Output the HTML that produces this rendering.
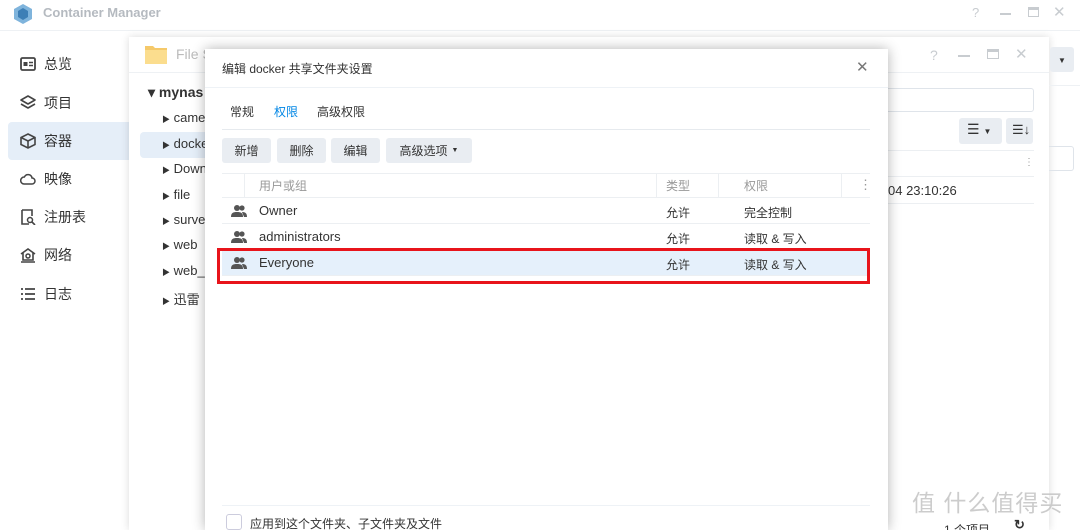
<!DOCTYPE html>
<html><head><meta charset="utf-8"><style>
*{box-sizing:border-box;margin:0;padding:0}
html{width:1080px;height:530px;overflow:hidden}
body{width:1080px;height:530px;overflow:hidden;background:#fff;font-family:"Liberation Sans","Noto Sans CJK SC",sans-serif;font-size:13px;color:#333;position:relative}
.abs{position:absolute;white-space:nowrap}
.hdr{left:0;top:0;width:1080px;height:31px;border-bottom:1px solid #eef1f4;background:#fff}
.side .it{position:absolute;left:8px;width:122px;height:38px;display:flex;align-items:center;padding-left:12px;font-size:14px;color:#333;white-space:nowrap}
.side .ic{width:16px;height:16px;margin-right:8px;display:inline-block;flex:none}
.fs{left:129px;top:37px;width:920px;height:493px;background:#fff;box-shadow:0 0 8px rgba(0,0,0,.15)}
.tree div{position:absolute;left:0;font-size:13px;color:#333}
.dlg{left:205px;top:49px;width:683px;height:481px;background:#fff;box-shadow:0 0 12px rgba(0,0,0,.3)}
.btn{position:absolute;top:89px;height:25px;background:#e9edf2;border-radius:3px;font-size:12px;color:#333;display:flex;align-items:center;justify-content:center}
.row{position:absolute;left:17px;width:648px;height:26px;border-bottom:1px solid #eceff2;font-size:13px}
.row span{position:absolute;top:6px;white-space:nowrap}
.usr{position:absolute;left:9px;top:6px;width:16px;height:14px}
</style></head><body>
<div class="abs hdr">
 <svg class="abs" style="left:13px;top:3px" width="20" height="22" viewBox="0 0 20 22"><polygon points="10,1 19,6 19,16 10,21 1,16 1,6" fill="#7fb4dc"/><polygon points="10,5 15,8 15,14 10,17 5,14 5,8" fill="#3d7fb6"/></svg>
 <div class="abs" style="left:43px;top:5px;font-size:13px;font-weight:bold;color:#b5bac0">Container Manager</div>
 <div class="abs" style="left:972px;top:5px;color:#c8ccd0;font-size:13px">?</div>
 <div class="abs" style="left:1000px;top:13px;width:11px;height:2px;background:#c8ccd0"></div>
 <div class="abs" style="left:1028px;top:7px;width:11px;height:10px;border:1.5px solid #c8ccd0;border-top-width:3px"></div>
 <div class="abs" style="left:1053px;top:3px;color:#c8ccd0;font-size:15px">✕</div>
</div>
<div class="side">
 <div class="it" style="top:45px"><svg class="ic" viewBox="0 0 16 16"><rect x="1" y="2" width="14" height="12" rx="1.5" fill="none" stroke="#444" stroke-width="1.8"/><rect x="3.5" y="6" width="4" height="4" fill="#444"/><path d="M9 6.5h4M9 9.5h4" stroke="#444" stroke-width="1.4"/></svg>总览</div>
 <div class="it" style="top:84px"><svg class="ic" viewBox="0 0 16 16"><path d="M8 1l7 4-7 4-7-4z M1 9l7 4 7-4" fill="none" stroke="#444" stroke-width="1.6" stroke-linejoin="round"/></svg>项目</div>
 <div class="it" style="top:122px;background:#e5eef8;border-radius:4px 0 0 4px"><svg class="ic" viewBox="0 0 16 16"><polygon points="8,1 15,4.5 15,11.5 8,15 1,11.5 1,4.5" fill="none" stroke="#444" stroke-width="1.6"/><polyline points="1,4.5 8,8 15,4.5" fill="none" stroke="#444" stroke-width="1.6"/><path d="M8 8v7" stroke="#444" stroke-width="1.6"/></svg>容器</div>
 <div class="it" style="top:160px"><svg class="ic" viewBox="0 0 16 16"><path d="M4 13h8a3 3 0 0 0 0-6 4 4 0 0 0-7.6-1A3.5 3.5 0 0 0 4 13z" fill="none" stroke="#444" stroke-width="1.5"/></svg>映像</div>
 <div class="it" style="top:198px"><svg class="ic" viewBox="0 0 16 16"><path d="M2 1v14h7M2 1h10v6" fill="none" stroke="#444" stroke-width="1.6"/><circle cx="10" cy="11" r="2.5" fill="none" stroke="#444" stroke-width="1.5"/><path d="M12 13l3 3" stroke="#444" stroke-width="1.6"/></svg>注册表</div>
 <div class="it" style="top:236px"><svg class="ic" viewBox="0 0 16 16"><path d="M1 7l7-5 7 5M3 6v7h10V6M1 15h14" fill="none" stroke="#444" stroke-width="1.6"/><circle cx="8" cy="9" r="2" fill="none" stroke="#444" stroke-width="1.5"/></svg>网络</div>
 <div class="it" style="top:275px"><svg class="ic" viewBox="0 0 16 16"><path d="M1 3h2M5 3h10M1 8h2M5 8h10M1 13h2M5 13h10" stroke="#444" stroke-width="1.8"/></svg>日志</div>
</div>
<div class="abs fs">
 <svg class="abs" style="left:16px;top:7px" width="22" height="20" viewBox="0 0 22 20"><path d="M0 2h8l2 2h12v16H0z" fill="#f5c96a"/><rect x="0" y="6" width="22" height="14" fill="#fbdd8e"/></svg>
 <div class="abs" style="left:47px;top:9px;color:#bbb;font-size:14px">File S</div>
 <div class="abs" style="left:0;top:35px;width:920px;height:1px;background:#eef1f4"></div>
 <div class="abs" style="left:11px;top:95px;width:70px;height:26px;background:#e5eef8;border-radius:4px"></div>
 <div class="tree">
  <div style="left:19px;top:47px;font-weight:bold;font-size:14px">▾ mynas</div>
  <div style="left:33px;top:73px"><small style="font-size:8px">▶</small> came</div>
  <div style="left:33px;top:99px"><small style="font-size:8px">▶</small> docke</div>
  <div style="left:33px;top:124px"><small style="font-size:8px">▶</small> Down</div>
  <div style="left:33px;top:150px"><small style="font-size:8px">▶</small> file</div>
  <div style="left:33px;top:175px"><small style="font-size:8px">▶</small> surve</div>
  <div style="left:33px;top:200px"><small style="font-size:8px">▶</small> web</div>
  <div style="left:33px;top:226px"><small style="font-size:8px">▶</small> web_</div>
  <div style="left:33px;top:252px"><small style="font-size:8px">▶</small> 迅雷</div>
 </div>
 <div class="abs" style="left:801px;top:10px;color:#c8ccd0;font-size:14px">?</div>
 <div class="abs" style="left:829px;top:18px;width:12px;height:2px;background:#c8ccd0"></div>
 <div class="abs" style="left:858px;top:12px;width:12px;height:10px;border:1.5px solid #c8ccd0;border-top-width:3px"></div>
 <div class="abs" style="left:886px;top:8px;color:#c8ccd0;font-size:15px">✕</div>
 <div class="abs" style="left:700px;top:51px;width:205px;height:24px;border:1px solid #dfe4ea;border-radius:3px;color:#bbb;font-size:12px;padding:3px 0 0 20px">搜索</div>
 <div class="abs" style="left:830px;top:81px;width:43px;height:26px;background:#e9edf2;border-radius:3px;font-size:14px;padding:3px 0 0 8px">☰ <small style="font-size:8px">▼</small></div>
 <div class="abs" style="left:877px;top:81px;width:27px;height:26px;background:#e9edf2;border-radius:3px;font-size:13px;padding:4px 0 0 6px">☰↓</div>
 <div class="abs" style="left:700px;top:113px;width:205px;height:1px;background:#eceff2"></div>
 <div class="abs" style="left:700px;top:139px;width:205px;height:1px;background:#eceff2"></div>
 <div class="abs" style="left:700px;top:166px;width:205px;height:1px;background:#eceff2"></div>
 <div class="abs" style="left:895px;top:120px;color:#999;font-size:10px">⋮</div>
 <div class="abs" style="left:759px;top:146px;font-size:13px">04 23:10:26</div>
 <div class="abs" style="left:815px;top:484px;font-size:12px">1 个项目</div>
 <div class="abs" style="left:885px;top:480px;font-size:13px;font-weight:bold">↻</div>
</div>
<div class="abs" style="left:912px;top:484px;color:#c4c4c4;font-size:23px;opacity:.85;letter-spacing:1px">值 什么值得买</div>
<div class="abs" style="left:1050px;top:47px;width:24px;height:25px;background:#e9edf2;border-radius:3px;font-size:8px;padding:9px 0 0 8px">▼</div>
<div class="abs" style="left:1049px;top:85px;width:31px;height:1px;background:#eef1f4"></div>
<div class="abs" style="left:1049px;top:146px;width:25px;height:25px;border:1px solid #dfe4ea;border-left:0;border-radius:0 3px 3px 0"></div>
<div class="abs dlg">
 <div class="abs" style="left:17px;top:11px;font-size:12px">编辑 docker 共享文件夹设置</div>
 <div class="abs" style="left:651px;top:9px;font-size:15px;color:#777">✕</div>
 <div class="abs" style="left:0;top:38px;width:683px;height:1px;background:#eef2f6"></div>
 <div class="abs" style="left:25px;top:54px;font-size:12px">常规</div>
 <div class="abs" style="left:69px;top:54px;font-size:12px;color:#0086e5">权限</div>
 <div class="abs" style="left:112px;top:54px;font-size:12px">高级权限</div>
 <div class="abs" style="left:17px;top:80px;width:648px;height:1px;background:#e6eaee"></div>
 <div class="btn" style="left:17px;width:49px">新增</div>
 <div class="btn" style="left:72px;width:49px">删除</div>
 <div class="btn" style="left:126px;width:49px">编辑</div>
 <div class="btn" style="left:181px;width:86px">高级选项 <small style="font-size:7px;margin-left:4px">▼</small></div>
 <div class="row" style="top:124px;border-top:1px solid #eceff2;color:#999;height:25px">
  <div class="abs" style="left:22px;top:0;height:24px;width:1px;background:#eceff2"></div>
  <span style="left:37px;font-size:12px;top:3px">用户或组</span>
  <div class="abs" style="left:434px;top:0;height:24px;width:1px;background:#eceff2"></div>
  <span style="left:444px;font-size:12px;top:3px">类型</span>
  <div class="abs" style="left:496px;top:0;height:24px;width:1px;background:#eceff2"></div>
  <span style="left:522px;font-size:12px;top:3px">权限</span>
  <div class="abs" style="left:619px;top:0;height:24px;width:1px;background:#eceff2"></div>
  <span style="left:637px;top:3px">⋮</span>
 </div>
 <div class="row" style="top:149px"><svg class="usr" viewBox="0 0 16 14"><circle cx="6" cy="4" r="3" fill="#555"/><path d="M0 13c0-4 2-5 6-5s6 1 6 5z" fill="#555"/><circle cx="11" cy="4" r="2.6" fill="#555"/><path d="M11 8c3 0 5 1 5 5h-3" fill="#555"/></svg><span style="left:37px;top:5px">Owner</span><span style="left:444px;font-size:12px">允许</span><span style="left:522px;font-size:12px">完全控制</span></div>
 <div class="row" style="top:175px"><svg class="usr" viewBox="0 0 16 14"><circle cx="6" cy="4" r="3" fill="#555"/><path d="M0 13c0-4 2-5 6-5s6 1 6 5z" fill="#555"/><circle cx="11" cy="4" r="2.6" fill="#555"/><path d="M11 8c3 0 5 1 5 5h-3" fill="#555"/></svg><span style="left:37px;top:5px">administrators</span><span style="left:444px;font-size:12px">允许</span><span style="left:522px;font-size:12px">读取 &amp; 写入</span></div>
 <div class="row" style="top:201px;background:#e5f0fb"><svg class="usr" viewBox="0 0 16 14"><circle cx="6" cy="4" r="3" fill="#555"/><path d="M0 13c0-4 2-5 6-5s6 1 6 5z" fill="#555"/><circle cx="11" cy="4" r="2.6" fill="#555"/><path d="M11 8c3 0 5 1 5 5h-3" fill="#555"/></svg><span style="left:37px;top:5px">Everyone</span><span style="left:444px;font-size:12px">允许</span><span style="left:522px;font-size:12px">读取 &amp; 写入</span></div>
 <div class="abs" style="left:12px;top:199px;width:653px;height:36px;border:3px solid #e8141b"></div>
 <div class="abs" style="left:17px;top:456px;width:648px;height:1px;background:#eef2f6"></div>
 <div class="abs" style="left:21px;top:465px;width:16px;height:16px;border:1px solid #ccd;border-radius:3px"></div>
 <div class="abs" style="left:45px;top:466px;font-size:12px">应用到这个文件夹、子文件夹及文件</div>
</div>
</body></html>
